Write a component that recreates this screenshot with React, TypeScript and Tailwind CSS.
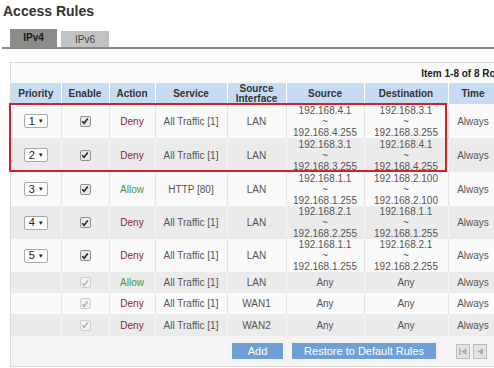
import React from "react";

type Row = {
  p?: number;
  action: "Deny" | "Allow";
  service: string;
  iface: string;
  src: string[] | null;
  dst: string[] | null;
  h: string;
  shade: boolean;
  disabled?: boolean;
};

const rows: Row[] = [
  { p: 1, action: "Deny", service: "All Traffic [1]", iface: "LAN", src: ["192.168.4.1", "192.168.4.255"], dst: ["192.168.3.1", "192.168.3.255"], h: "h-[34px]", shade: false },
  { p: 2, action: "Deny", service: "All Traffic [1]", iface: "LAN", src: ["192.168.3.1", "192.168.3.255"], dst: ["192.168.4.1", "192.168.4.255"], h: "h-[34px]", shade: true },
  { p: 3, action: "Allow", service: "HTTP [80]", iface: "LAN", src: ["192.168.1.1", "192.168.1.255"], dst: ["192.168.2.100", "192.168.2.100"], h: "h-[34px]", shade: false },
  { p: 4, action: "Deny", service: "All Traffic [1]", iface: "LAN", src: ["192.168.2.1", "192.168.2.255"], dst: ["192.168.1.1", "192.168.1.255"], h: "h-[33px]", shade: true },
  { p: 5, action: "Deny", service: "All Traffic [1]", iface: "LAN", src: ["192.168.1.1", "192.168.1.255"], dst: ["192.168.2.1", "192.168.2.255"], h: "h-[33px]", shade: false },
  { action: "Allow", service: "All Traffic [1]", iface: "LAN", src: null, dst: null, h: "h-[21px]", shade: true, disabled: true },
  { action: "Deny", service: "All Traffic [1]", iface: "WAN1", src: null, dst: null, h: "h-[21px]", shade: false, disabled: true },
  { action: "Deny", service: "All Traffic [1]", iface: "WAN2", src: null, dst: null, h: "h-[22px]", shade: true, disabled: true },
];

function Check({ disabled }: { disabled?: boolean }) {
  return (
    <span
      className={
        disabled
          ? "inline-flex w-[11px] h-[11px] items-center justify-center rounded-[2px] border border-[#cdcdcd] bg-[#f2f2f2]"
          : "inline-flex w-[11px] h-[11px] items-center justify-center rounded-[2px] border border-[#8e8e8e] bg-[#e8e8e8]"
      }
    >
      <svg width="8" height="8" viewBox="0 0 8 8">
        <path d="M1.2 4.3 L3.1 6.2 L6.8 1.5" fill="none" stroke={disabled ? "#b4b4b4" : "#2a2a2a"} strokeWidth="1.6" />
      </svg>
    </span>
  );
}

function Sel({ n }: { n: number }) {
  return (
    <div className="inline-flex items-center justify-between w-[24px] h-[14px] bg-white border border-[#a8a8a8] rounded-[2px] pl-[4px] pr-[3px] text-[11px] leading-none text-[#222]">
      <span>{n}</span>
      <span className="text-[6px]">▼</span>
    </div>
  );
}

function Ip({ v }: { v: string[] | null }) {
  if (!v) return <span>Any</span>;
  return (
    <div className="flex flex-col items-center leading-[11px]">
      <span>{v[0]}</span>
      <span>~</span>
      <span>{v[1]}</span>
    </div>
  );
}

export default function App() {
  return (
    <div className="relative w-[494px] h-[368px] overflow-hidden bg-white font-['Liberation_Sans',Arial,sans-serif]">
      <div className="pt-[2px] pl-[3px] text-[14px] font-bold leading-[18px] text-[#333]">Access Rules</div>

      <div className="mt-[9px] ml-[2px] w-[600px] border-b-2 border-[#8a8a8a] pl-[8px] flex items-end gap-[4px]">
        <div className="w-[47px] h-[18px] bg-[#8c8c8c] flex items-center justify-center text-[10px] font-bold text-[#1a1a1a] pb-[1px]">IPv4</div>
        <div className="w-[48px] h-[16px] bg-[#c2c2c2] flex items-center justify-center text-[10px] text-[#444]">IPv6</div>
      </div>

      <div className="ml-[10px] mt-[13px] w-[506px] border border-[#d9d9d9] bg-[#f4f4f4]">
        <div className="h-[20px] flex items-center justify-end pr-[6px] bg-[#fbfbfb] text-[10px] font-bold text-[#222]">
          Item 1-8 of 8 Rows
        </div>
        <table className="table-fixed border-collapse w-[504px] text-[10px] text-[#555]">
          <colgroup>
            <col className="w-[50px]" />
            <col className="w-[48px]" />
            <col className="w-[46px]" />
            <col className="w-[72px]" />
            <col className="w-[59px]" />
            <col className="w-[78px]" />
            <col className="w-[84px]" />
            <col className="w-[50px]" />
            <col className="w-[17px]" />
          </colgroup>
          <thead>
            <tr className="h-[21px] bg-[#c7dbf2] text-[#333] font-bold [&>th]:border-r [&>th]:border-white [&>th]:p-0 [&>th]:font-bold">
              <th>Priority</th>
              <th>Enable</th>
              <th>Action</th>
              <th>Service</th>
              <th className="leading-[10px]">
                Source
                <br />
                Interface
              </th>
              <th>Source</th>
              <th>Destination</th>
              <th>Time</th>
              <th></th>
            </tr>
          </thead>
          <tbody>
            {rows.map((r, i) => (
              <tr
                key={i}
                className={
                  r.shade
                    ? `${r.h} bg-[#ebebeb] text-center [&>td]:border-r [&>td]:border-[#f7f7f7] [&>td]:p-0`
                    : `${r.h} bg-[#fafafa] text-center [&>td]:border-r [&>td]:border-[#e3e3e3] [&>td]:p-0`
                }
              >
                <td>{r.p ? <Sel n={r.p} /> : null}</td>
                <td>
                  <div className="flex justify-center">
                    <Check disabled={r.disabled} />
                  </div>
                </td>
                <td className={r.action === "Deny" ? "text-[#8a2534]" : "text-[#3f9b39]"}>{r.action}</td>
                <td>{r.service}</td>
                <td>{r.iface}</td>
                <td>
                  <Ip v={r.src} />
                </td>
                <td>
                  <Ip v={r.dst} />
                </td>
                <td>Always</td>
                <td></td>
              </tr>
            ))}
          </tbody>
        </table>
        <div className="h-[30px] flex items-center pl-[221px]">
          <div className="w-[51px] h-[16px] bg-[#6e9fd5] text-white text-[11px] flex items-center justify-center">Add</div>
          <div className="ml-[9px] w-[144px] h-[16px] bg-[#6e9fd5] text-white text-[11px] flex items-center justify-center">
            Restore to Default Rules
          </div>
          <div className="ml-[20px] flex gap-[3px]">
            <div className="w-[14px] h-[15px] bg-[#e4e4e4] border border-[#bcbcbc] flex items-center justify-center">
              <svg width="10" height="9" viewBox="0 0 10 9">
                <rect x="1" y="1" width="1.6" height="7" fill="#9fb3bb" />
                <path d="M8.5 1 L3.2 4.5 L8.5 8 Z" fill="#9fb3bb" />
              </svg>
            </div>
            <div className="w-[14px] h-[15px] bg-[#e4e4e4] border border-[#bcbcbc] flex items-center justify-center">
              <svg width="10" height="9" viewBox="0 0 10 9">
                <path d="M8 1 L2.5 4.5 L8 8 Z" fill="#9fb3bb" />
              </svg>
            </div>
          </div>
        </div>
      </div>

      <div className="absolute top-[103px] left-[9px] w-[438px] h-[69px] border-2 border-[#d71f2a]" />
    </div>
  );
}
